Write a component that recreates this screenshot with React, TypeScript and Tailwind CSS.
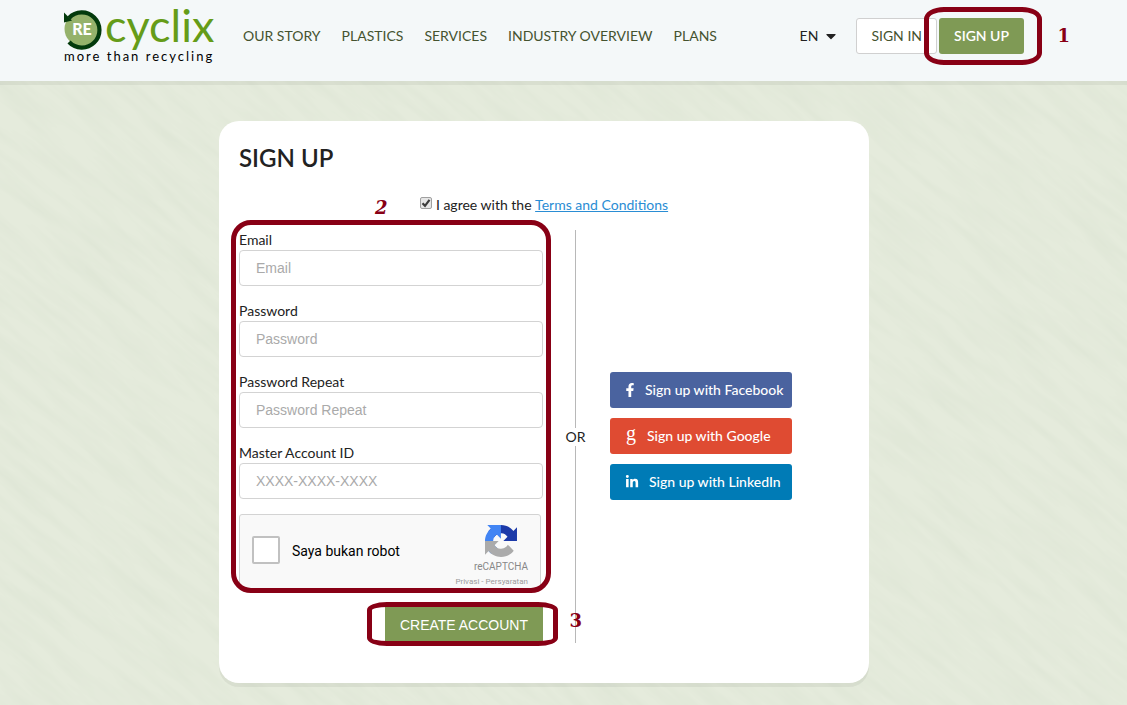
import { useState } from 'react';
import type { ReactNode } from 'react';
import { FaCaretDown, FaFacebookF, FaLinkedinIn } from 'react-icons/fa';

interface Field {
  id: string;
  label: string;
  type: string;
  placeholder: string;
}

const NAV_LINKS = ['OUR STORY', 'PLASTICS', 'SERVICES', 'INDUSTRY OVERVIEW', 'PLANS'];

const FIELDS: Field[] = [
  { id: 'email', label: 'Email', type: 'email', placeholder: 'Email' },
  { id: 'password', label: 'Password', type: 'password', placeholder: 'Password' },
  { id: 'password-repeat', label: 'Password Repeat', type: 'password', placeholder: 'Password Repeat' },
  { id: 'master-id', label: 'Master Account ID', type: 'text', placeholder: 'XXXX-XXXX-XXXX' },
];

const SOCIALS: { name: string; color: string; icon: ReactNode }[] = [
  { name: 'Facebook', color: 'bg-[#4a639f]', icon: <FaFacebookF className="h-3.5 w-2.5" /> },
  {
    name: 'Google',
    color: 'bg-[#df4b32]',
    icon: (
      <span className="w-3 pb-1.5 text-center font-['Liberation_Serif',serif] text-xl leading-4 font-normal">g</span>
    ),
  },
  { name: 'LinkedIn', color: 'bg-[#007bb6]', icon: <FaLinkedinIn className="h-3.5 w-3.5" /> },
];

// Brushed paper grain behind the page
function PaperTexture() {
  return (
    <div className="pointer-events-none absolute inset-0 -z-10 overflow-hidden">
      <svg className="absolute -top-1/2 -left-1/2 h-[200%] w-[200%] rotate-40">
        <filter id="grain" x="0" y="0" width="100%" height="100%">
          <feTurbulence type="fractalNoise" baseFrequency="0.012 0.09" numOctaves="5" seed="7" />
          <feColorMatrix values="0 0 0 0 0.6  0 0 0 0 0.68  0 0 0 0 0.55  0.4 0 0 0 -0.14" />
        </filter>
        <rect width="100%" height="100%" filter="url(#grain)" />
      </svg>
    </div>
  );
}

function Logo() {
  return (
    <a href="#" className="block">
      <span className="flex h-10 items-start gap-px">
        <span className="relative block h-10 w-10">
          <svg viewBox="0 0 40 40" className="h-10 w-10 overflow-visible">
            <circle cx="17.5" cy="21" r="17" fill="#95b26b" />
            <path d="M5 10A17.6 17.6 0 1 1 5 34" fill="none" stroke="#033a0c" strokeWidth="4.2" />
            <path d="M0 4.5 L8 12.5 L0 14.5 Z" fill="#033a0c" />
          </svg>
          <span className="absolute inset-0 pt-px pr-1 text-center text-base leading-10 font-black text-white">RE</span>
        </span>
        <span className="text-[45px] leading-[34px] text-[#659c18]">cyclix</span>
      </span>
      <span className="block text-[13px] leading-4 tracking-[2px] whitespace-nowrap text-black">
        more than recycling
      </span>
    </a>
  );
}

function RecaptchaIcon() {
  return (
    <svg viewBox="0 0 64 64" className="h-8 w-8">
      <path
        fill="#1c3aa9"
        d="M64 31.955l-.033-1.37V4.687l-7.16 7.16C50.948 4.674 42.033.093 32.05.093c-10.4 0-19.622 4.96-25.458 12.64l11.736 11.86a15.55 15.55 0 0 1 4.754-5.334c2.05-1.6 4.952-2.906 8.968-2.906.485 0 .86.057 1.135.163 4.976.393 9.288 3.14 11.828 7.124l-8.307 8.307L64 31.953"
      />
      <path
        fill="#4285f4"
        d="M31.862.094l-1.37.033H4.594l7.16 7.16C4.58 13.147 0 22.06 0 32.046c0 10.4 4.96 19.622 12.64 25.458L24.5 45.768a15.55 15.55 0 0 1-5.334-4.754c-1.6-2.05-2.906-4.952-2.906-8.968 0-.485.057-.86.163-1.135.393-4.976 3.14-9.288 7.124-11.828l8.307 8.307L31.86.095"
      />
      <path
        fill="#ababab"
        d="M.001 32.045l.033 1.37v25.898l7.16-7.16c5.86 7.173 14.774 11.754 24.76 11.754 10.4 0 19.622-4.96 25.458-12.64l-11.736-11.86a15.55 15.55 0 0 1-4.754 5.334c-2.05 1.6-4.952 2.906-8.968 2.906-.485 0-.86-.057-1.135-.163-4.976-.393-9.288-3.14-11.828-7.124l8.307-8.307c-10.522.04-22.4.066-27.295-.005"
      />
    </svg>
  );
}

function Marker({ box, digit, children }: { box: string; digit: string; children: string }) {
  return (
    <>
      <span className={`pointer-events-none absolute border-[5px] border-[#880015] ${box}`} />
      <span
        className={`pointer-events-none absolute font-['DejaVu_Serif',serif] text-lg leading-5 font-bold text-[#880015] ${digit}`}
      >
        {children}
      </span>
    </>
  );
}

function Header() {
  return (
    <header className="bg-[#f4f8f9] pr-[39px] shadow-[0_4px_0_rgba(0,0,0,0.05)]">
      <div className="mx-auto flex h-[81px] max-w-[960px] items-start">
        <div className="w-[151px] pt-2">
          <Logo />
        </div>
        <nav className="mt-[18px] ml-7 flex h-9 items-center gap-[21px] whitespace-nowrap text-[#45532f]">
          {NAV_LINKS.map((link) => (
            <a key={link} href="#">
              {link}
            </a>
          ))}
        </nav>
        <div className="mt-[18px] ml-auto flex h-9 items-center">
          <button type="button" className="mr-5 flex items-center gap-2 text-[#222]">
            EN
            <FaCaretDown className="h-4 w-2.5" />
          </button>
          <a
            href="#"
            className="mr-0.5 flex h-9 items-center rounded-[3px] border border-[#d0d0d0] bg-white px-3.5 whitespace-nowrap text-[#45532f]"
          >
            SIGN IN
          </a>
          <div className="relative">
            <a
              href="#"
              className="flex h-9 items-center rounded-[3px] bg-[#7f9a55] px-[15px] font-semibold whitespace-nowrap text-white"
            >
              SIGN UP
            </a>
            <Marker box="-top-[11px] -bottom-[11px] -left-[15px] -right-[18px] rounded-[20px/12px]" digit="top-2 -right-[46px]">
              1
            </Marker>
          </div>
        </div>
      </div>
    </header>
  );
}

function Captcha() {
  return (
    <div className="mr-0.5 flex h-[76px] rounded-[3px] border border-[#d3d3d3] bg-[#f9f9f9] px-3 font-[Roboto,sans-serif]">
      <label className="flex items-center gap-3 pb-1 text-black">
        <input type="checkbox" className="h-7 w-7 appearance-none rounded-xs border-2 border-[#c1c1c1] bg-white" />
        <span className="pt-0.5">Saya bukan robot</span>
      </label>
      <div className="ml-auto flex flex-col items-end pt-2.5 text-[#9b9b9b]">
        <div className="flex flex-col items-center">
          <RecaptchaIcon />
          <span className="text-[10px] leading-5 text-[#888]">reCAPTCHA</span>
        </div>
        <div className="text-[8px] leading-2.5 whitespace-nowrap">
          <a href="#">Privasi</a> - <a href="#">Persyaratan</a>
        </div>
      </div>
    </div>
  );
}

export default function App() {
  const [agreed, setAgreed] = useState(true);

  return (
    <div className="relative isolate min-h-screen bg-[#e5ebdc] font-[Lato,sans-serif] text-sm leading-5 text-[#222]">
      <PaperTexture />
      <Header />
      <main className="pt-10 pr-[39px] pb-5">
        <section className="mx-auto max-w-[650px] rounded-[20px] bg-white px-5 pt-5 pb-10 shadow-[0_4px_0_rgba(0,0,0,0.05)]">
          <h1 className="text-2xl leading-[34px] font-semibold">SIGN UP</h1>
          <div className="mt-5 flex items-center justify-center">
            <span className="mr-1 mb-1 grid">
              <input
                id="agree"
                type="checkbox"
                checked={agreed}
                onChange={(e) => setAgreed(e.target.checked)}
                className="col-start-1 row-start-1 h-3 w-3 appearance-none rounded-xs border border-[#a0a0a0] bg-[#e6e6e6]"
              />
              {agreed && (
                <svg viewBox="0 0 12 12" className="pointer-events-none col-start-1 row-start-1 h-3 w-3">
                  <path d="M2.5 6.2L5 8.8L9.5 2.8" fill="none" stroke="#3c3c3c" strokeWidth="2.2" />
                </svg>
              )}
            </span>
            <label htmlFor="agree">I agree with the&nbsp;</label>
            <a href="#" className="text-[#2a8dd4] underline">
              Terms and Conditions
            </a>
          </div>

          <div className="mt-[15px] flex">
            <form className="w-[304px]" onSubmit={(e) => e.preventDefault()}>
              <div className="relative flex flex-col gap-[15px]">
                {FIELDS.map((field) => (
                  <div key={field.id}>
                    <label htmlFor={field.id} className="block">
                      {field.label}
                    </label>
                    <input
                      id={field.id}
                      type={field.type}
                      placeholder={field.placeholder}
                      className="block h-9 w-full rounded border border-[#d3d3d3] bg-white px-4 font-['Liberation_Sans',sans-serif] outline-none placeholder:text-[#aaa] focus:border-[#7f9a55]"
                    />
                  </div>
                ))}
                <Captcha />
                <Marker box="-top-2.5 -right-2 -bottom-[3px] -left-2 rounded-[20px]" digit="-top-8 left-[136px] italic">
                  2
                </Marker>
              </div>
              <div className="relative mt-[17px] ml-auto w-fit">
                <button
                  type="submit"
                  className="block h-9 bg-[#7f9a55] px-[15px] font-['Liberation_Sans',sans-serif] whitespace-nowrap text-white"
                >
                  CREATE ACCOUNT
                </button>
                <Marker box="-top-[5px] -right-[15px] -bottom-[3px] -left-[18px] rounded-[20px/8px]" digit="top-1 -right-[39px]">
                  3
                </Marker>
              </div>
            </form>

            <div className="flex w-[65px] flex-col items-center">
              <span className="w-px flex-1 bg-[#b8b8b8]" />
              <span className="leading-[18px]">OR</span>
              <span className="w-px flex-1 bg-[#b8b8b8]" />
            </div>

            <div className="flex flex-col justify-center gap-2.5 pb-0.5 pl-0.5">
              {SOCIALS.map((social) => (
                <button
                  key={social.name}
                  type="button"
                  className={`flex h-9 w-[182px] items-center gap-2.5 rounded-[3px] pl-[15px] font-medium whitespace-nowrap text-white ${social.color}`}
                >
                  {social.icon}
                  Sign up with {social.name}
                </button>
              ))}
            </div>
          </div>
        </section>
      </main>
    </div>
  );
}
